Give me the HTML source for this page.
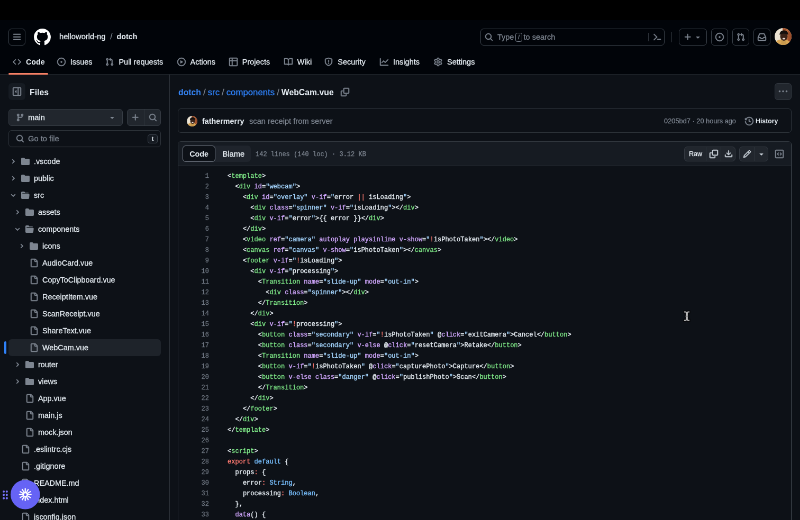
<!DOCTYPE html>
<html lang="en">
<head>
<meta charset="utf-8">
<title>dotch/src/components/WebCam.vue at main · helloworld-ng/dotch</title>
<style>
*{box-sizing:border-box;margin:0;padding:0}
html,body{width:800px;height:520px;overflow:hidden;background:#0d1117}
body{font-family:"Liberation Sans",sans-serif;color:#e6edf3}
#root{position:absolute;left:0;top:0;width:1512px;height:983px;transform:scale(0.529101);transform-origin:0 0;will-change:transform;overflow:hidden;font-size:14.7px;line-height:20px;-webkit-text-stroke:0.3px}
[style*="font-weight:700"],.navitem.sel span{-webkit-text-stroke:0}
.abs{position:absolute}
#topbar{position:absolute;left:0;top:0;width:1512px;height:38px;background:#000}
#hdr{position:absolute;left:0;top:38px;width:1512px;height:103px;background:#010409;border-bottom:1px solid #21262d}
.hbtn{position:absolute;width:32px;height:32px;border:1px solid #3d444d;border-radius:6px;display:flex;align-items:center;justify-content:center;color:#7d8590}
.navitem{position:absolute;top:69px;height:20px;display:flex;align-items:center;color:#e6edf3;white-space:nowrap}
.navitem svg{margin-right:9px}
.navitem span{font-size:14.500px}
.navitem.sel span{font-weight:700;font-size:14.3px}
#side{position:absolute;left:0;top:141px;width:321px;height:842px;border-right:1px solid #30363d}
#main{position:absolute;left:321px;top:141px;width:1191px;height:842px}
.btn{background:#21262d;border:1px solid #363c44;border-radius:6px}
.trow{position:absolute;left:16px;width:288px;height:32px;border-radius:6px}
.trow.tsel{background:#1e232a}
.trow.tsel .tname{color:#e6edf3}
.tind{position:absolute;left:-8px;top:4px;width:4px;height:24px;border-radius:6px;background:#2f81f7}
.tchev{position:absolute;top:10px}
.tico{position:absolute;top:8px}
.tname{position:absolute;top:6px;white-space:nowrap;color:#e6edf3;font-size:14.400px}
.cl{height:20px;white-space:pre;position:relative}
.ln{position:absolute;left:0;width:58px;text-align:right;color:#6e7681;font-family:"Liberation Mono",monospace;font-size:12px;line-height:20px}
.cc{position:absolute;left:93px;-webkit-text-stroke:0.4px;font-family:"Liberation Mono",monospace;font-size:12px;line-height:20px;color:#e6edf3;letter-spacing:0.015px}
.mut{color:#7d8590}
</style>
</head>
<body>
<div id="root">
  <div id="topbar"></div>
  <div id="hdr">
    <div class="hbtn" style="left:16px;top:16px"><svg width="16" height="16" viewBox="0 0 16 16" fill="#7d8590" stroke="#7d8590" stroke-width="0.55" style="display:block;flex:none;overflow:visible;"><path fill-rule="evenodd" d="M1 2.75A.75.75 0 0 1 1.75 2h12.5a.75.75 0 0 1 0 1.5H1.75A.75.75 0 0 1 1 2.75Zm0 5A.75.75 0 0 1 1.75 7h12.5a.75.75 0 0 1 0 1.5H1.75A.75.75 0 0 1 1 7.75ZM1.75 12h12.5a.75.75 0 0 1 0 1.5H1.75a.75.75 0 0 1 0-1.5Z"/></svg></div>
    <div class="abs" style="left:64px;top:16px;color:#fff"><svg width="32" height="32" viewBox="0 0 16 16" fill="#ffffff" stroke="#ffffff" stroke-width="0" style="display:block;flex:none;overflow:visible;"><path fill-rule="evenodd" d="M8 0c4.42 0 8 3.58 8 8a8.013 8.013 0 0 1-5.45 7.59c-.4.08-.55-.17-.55-.38 0-.27.01-1.13.01-2.2 0-.75-.25-1.23-.54-1.48 1.78-.2 3.65-.88 3.65-3.95 0-.88-.31-1.59-.82-2.15.08-.2.36-1.02-.08-2.12 0 0-.67-.22-2.2.82-.64-.18-1.32-.27-2-.27-.68 0-1.36.09-2 .27-1.53-1.03-2.2-.82-2.2-.82-.44 1.1-.16 1.92-.08 2.12-.51.56-.82 1.28-.82 2.15 0 3.06 1.86 3.75 3.64 3.95-.23.2-.44.55-.51 1.07-.46.21-1.61.55-2.33-.66-.15-.24-.6-.83-1.23-.82-.67.01-.27.38.01.53.34.19.73.9.82 1.13.16.45.68 1.31 2.69.94 0 .67.01 1.3.01 1.49 0 .21-.15.45-.55.38A7.995 7.995 0 0 1 0 8c0-4.42 3.58-8 8-8Z"/></svg></div>
    <div class="abs" style="left:112px;top:21px;white-space:nowrap"><span>helloworld-ng</span><span class="mut" style="margin:0 8px 0 9px">/</span><span style="font-weight:700;font-size:14.3px">dotch</span></div>
    <!-- search -->
    <div class="abs" style="left:908px;top:16px;width:348px;height:32px;border:1px solid #3d444d;border-radius:6px">
      <div class="abs" style="left:6.500px;top:6.500px"><svg width="16" height="16" viewBox="0 0 16 16" fill="#7d8590" stroke="#7d8590" stroke-width="0.55" style="display:block;flex:none;overflow:visible;"><path fill-rule="evenodd" d="M10.68 11.74a6 6 0 0 1-7.922-8.982 6 6 0 0 1 8.982 7.922l3.04 3.04a.749.749 0 0 1-.326 1.275.749.749 0 0 1-.734-.215ZM11.5 7a4.499 4.499 0 1 0-8.997 0A4.499 4.499 0 0 0 11.5 7Z"/></svg></div>
      <div class="abs mut" style="left:31px;top:5px;white-space:nowrap;font-size:14.5px">Type <span style="display:inline-block;border:1px solid #7d8590;border-radius:3.500px;font-size:11px;line-height:15px;padding:0 4px;vertical-align:1.500px;margin:0 -1.500px">/</span> to search</div>
      <div class="abs" style="left:316px;top:7px;width:1px;height:16px;background:#30363d"></div>
      <div class="abs" style="left:325px;top:7px"><svg width="16" height="16" viewBox="0 0 16 16" fill="#7d8590" stroke="#7d8590" stroke-width="0.55" style="display:block;flex:none;overflow:visible;"><path fill-rule="evenodd" d="m6.354 8.04-4.773 4.773a.75.75 0 1 0 1.061 1.06L7.945 8.57a.75.75 0 0 0 0-1.06L2.642 2.206a.75.75 0 0 0-1.06 1.061L6.353 8.04ZM8.75 11.5a.75.75 0 0 0 0 1.5h5.5a.75.75 0 0 0 0-1.5h-5.5Z"/></svg></div>
    </div>
    <div class="abs" style="left:1269px;top:22px;width:1px;height:20px;background:#30363d"></div>
    <div class="hbtn" style="left:1283px;top:16px;width:53px;justify-content:flex-start;padding-left:8px"><svg width="16" height="16" viewBox="0 0 16 16" fill="#7d8590" stroke="#7d8590" stroke-width="0.55" style="display:block;flex:none;overflow:visible;"><path fill-rule="evenodd" d="M7.75 2a.75.75 0 0 1 .75.75V7h4.25a.75.75 0 0 1 0 1.5H8.5v4.25a.75.75 0 0 1-1.5 0V8.5H2.75a.75.75 0 0 1 0-1.5H7V2.75A.75.75 0 0 1 7.75 2Z"/></svg><span style="margin-left:3px"><svg width="16" height="16" viewBox="0 0 16 16" fill="#7d8590" stroke="#7d8590" stroke-width="0" style="display:block;flex:none;overflow:visible;"><path fill-rule="evenodd" d="m4.427 7.427 3.396 3.396a.25.25 0 0 0 .354 0l3.396-3.396A.25.25 0 0 0 11.396 7H4.604a.25.25 0 0 0-.177.427Z"/></svg></span></div>
    <div class="hbtn" style="left:1344px;top:16px"><svg width="16" height="16" viewBox="0 0 16 16" fill="#7d8590" stroke="#7d8590" stroke-width="0.55" style="display:block;flex:none;overflow:visible;"><path fill-rule="evenodd" d="M8 9.5a1.5 1.5 0 1 0 0-3 1.5 1.5 0 0 0 0 3Z M8 0a8 8 0 1 1 0 16A8 8 0 0 1 8 0ZM1.5 8a6.5 6.5 0 1 0 13 0 6.5 6.5 0 0 0-13 0Z"/></svg></div>
    <div class="hbtn" style="left:1384px;top:16px"><svg width="16" height="16" viewBox="0 0 16 16" fill="#7d8590" stroke="#7d8590" stroke-width="0.55" style="display:block;flex:none;overflow:visible;"><path fill-rule="evenodd" d="M1.5 3.25a2.25 2.25 0 1 1 3 2.122v5.256a2.251 2.251 0 1 1-1.5 0V5.372A2.25 2.25 0 0 1 1.5 3.25Zm5.677-.177L9.573.677A.25.25 0 0 1 10 .854V2.5h1A2.5 2.5 0 0 1 13.5 5v5.628a2.251 2.251 0 1 1-1.5 0V5a1 1 0 0 0-1-1h-1v1.646a.25.25 0 0 1-.427.177L7.177 3.427a.25.25 0 0 1 0-.354ZM3.75 2.5a.75.75 0 1 0 0 1.5.75.75 0 0 0 0-1.5Zm0 9.5a.75.75 0 1 0 0 1.5.75.75 0 0 0 0-1.5Zm8.25.75a.75.75 0 1 0 1.5 0 .75.75 0 0 0-1.5 0Z"/></svg></div>
    <div class="hbtn" style="left:1424px;top:16px"><svg width="16" height="16" viewBox="0 0 16 16" fill="#7d8590" stroke="#7d8590" stroke-width="0.55" style="display:block;flex:none;overflow:visible;"><path fill-rule="evenodd" d="M2.8 2.06A1.75 1.75 0 0 1 4.41 1h7.18c.7 0 1.333.417 1.61 1.06l2.74 6.395c.04.093.06.194.06.295v4.5A1.75 1.75 0 0 1 14.25 15H1.75A1.75 1.75 0 0 1 0 13.25v-4.5c0-.101.02-.202.06-.295Zm1.61.44a.25.25 0 0 0-.23.152L1.887 8H4.75a.75.75 0 0 1 .6.3L6.625 10h2.75l1.275-1.7a.75.75 0 0 1 .6-.3h2.863L11.82 2.652a.25.25 0 0 0-.23-.152Zm10.09 7h-2.875l-1.275 1.7a.75.75 0 0 1-.6.3h-3.5a.75.75 0 0 1-.6-.3L4.375 9.500H1.5v3.750c0 .138.112.25.25.25h12.5a.25.25 0 0 0 .25-.25Z"/></svg></div>
    <svg class="abs" style="left:1464px;top:15px" width="32" height="32" viewBox="0 0 32 32"><defs><clipPath id="av"><circle cx="16" cy="16" r="16"/></clipPath></defs><g clip-path="url(#av)"><rect width="32" height="32" fill="#ebe3d3"/><rect x="15" width="17" height="32" fill="#9c4f2b"/><rect x="22" width="4" height="32" fill="#b7683c"/><path d="M0 32c1-8 6-10.500 15-10.500S29 24 31 32z" fill="#d8a655"/><path d="M13 22h8l1 10h-10z" fill="#c99a4e"/><ellipse cx="17.500" cy="15.500" rx="7" ry="8.500" fill="#3a2319"/><path d="M9.500 13c-.5-6 3.500-8.500 8-8.500s8.500 2.500 8 8.500c-2.500-3.500-13.500-3.500-16 0z" fill="#15100e"/><ellipse cx="17.500" cy="20" rx="2.800" ry="1.500" fill="#e9dcd4"/></g></svg>
    <!-- nav -->
    <div class="navitem sel" style="left:24px"><svg width="16" height="16" viewBox="0 0 16 16" fill="#7d8590" stroke="#7d8590" stroke-width="0.55" style="display:block;flex:none;overflow:visible;"><path fill-rule="evenodd" d="m11.28 3.22 4.25 4.25a.75.75 0 0 1 0 1.06l-4.25 4.25a.749.749 0 0 1-1.275-.326.749.749 0 0 1 .215-.734L13.94 8l-3.72-3.72a.749.749 0 0 1 .326-1.275.749.749 0 0 1 .734.215Zm-6.56 0a.751.751 0 0 1 1.042.018.751.751 0 0 1 .018 1.042L2.06 8l3.72 3.72a.749.749 0 0 1-.326 1.275.749.749 0 0 1-.734-.215L.47 8.53a.75.75 0 0 1 0-1.06Z"/></svg><span>Code</span></div><div class="navitem" style="left:107.7px"><svg width="16" height="16" viewBox="0 0 16 16" fill="#7d8590" stroke="#7d8590" stroke-width="0.55" style="display:block;flex:none;overflow:visible;"><path fill-rule="evenodd" d="M8 9.5a1.5 1.5 0 1 0 0-3 1.5 1.5 0 0 0 0 3Z M8 0a8 8 0 1 1 0 16A8 8 0 0 1 8 0ZM1.5 8a6.5 6.5 0 1 0 13 0 6.5 6.5 0 0 0-13 0Z"/></svg><span>Issues</span></div><div class="navitem" style="left:199.4px"><svg width="16" height="16" viewBox="0 0 16 16" fill="#7d8590" stroke="#7d8590" stroke-width="0.55" style="display:block;flex:none;overflow:visible;"><path fill-rule="evenodd" d="M1.5 3.25a2.25 2.25 0 1 1 3 2.122v5.256a2.251 2.251 0 1 1-1.5 0V5.372A2.25 2.25 0 0 1 1.5 3.25Zm5.677-.177L9.573.677A.25.25 0 0 1 10 .854V2.5h1A2.5 2.5 0 0 1 13.5 5v5.628a2.251 2.251 0 1 1-1.5 0V5a1 1 0 0 0-1-1h-1v1.646a.25.25 0 0 1-.427.177L7.177 3.427a.25.25 0 0 1 0-.354ZM3.75 2.5a.75.75 0 1 0 0 1.5.75.75 0 0 0 0-1.5Zm0 9.5a.75.75 0 1 0 0 1.5.75.75 0 0 0 0-1.5Zm8.25.75a.75.75 0 1 0 1.5 0 .75.75 0 0 0-1.5 0Z"/></svg><span>Pull requests</span></div><div class="navitem" style="left:334.5px"><svg width="16" height="16" viewBox="0 0 16 16" fill="#7d8590" stroke="#7d8590" stroke-width="0.55" style="display:block;flex:none;overflow:visible;"><path fill-rule="evenodd" d="M8 0a8 8 0 1 1 0 16A8 8 0 0 1 8 0ZM1.5 8a6.5 6.5 0 1 0 13 0 6.5 6.5 0 0 0-13 0Zm4.879-2.773 4.264 2.559a.25.25 0 0 1 0 .428l-4.264 2.559A.25.25 0 0 1 6 10.559V5.442a.25.25 0 0 1 .379-.215Z"/></svg><span>Actions</span></div><div class="navitem" style="left:432.8px"><svg width="16" height="16" viewBox="0 0 16 16" fill="#7d8590" stroke="#7d8590" stroke-width="0.55" style="display:block;flex:none;overflow:visible;"><path fill-rule="evenodd" d="M0 1.75C0 .784.784 0 1.75 0h12.5C15.216 0 16 .784 16 1.75v12.5A1.75 1.75 0 0 1 14.25 16H1.75A1.75 1.75 0 0 1 0 14.25ZM6.5 6.5v8h7.75a.25.25 0 0 0 .25-.25V6.5Zm8-1.5V1.75a.25.25 0 0 0-.25-.25H6.5V5Zm-13 1.5v7.75c0 .138.112.25.25.25H5v-8ZM5 5V1.5H1.75a.25.25 0 0 0-.25.25V5Z"/></svg><span>Projects</span></div><div class="navitem" style="left:536.8px"><svg width="16" height="16" viewBox="0 0 16 16" fill="#7d8590" stroke="#7d8590" stroke-width="0.55" style="display:block;flex:none;overflow:visible;"><path fill-rule="evenodd" d="M0 1.75A.75.75 0 0 1 .75 1h4.253c1.227 0 2.317.59 3 1.501A3.743 3.743 0 0 1 11.006 1h4.245a.75.75 0 0 1 .75.75v10.5a.75.75 0 0 1-.75.75h-4.507a2.25 2.25 0 0 0-1.591.659l-.622.621a.75.75 0 0 1-1.06 0l-.622-.621A2.25 2.25 0 0 0 5.258 13H.75a.75.75 0 0 1-.75-.75Zm7.251 10.324.004-5.073-.002-2.253A2.25 2.25 0 0 0 5.003 2.5H1.5v9h3.757a3.75 3.75 0 0 1 1.994.574ZM8.755 4.75l-.004 7.322a3.752 3.752 0 0 1 1.992-.572H14.5v-9h-3.495a2.25 2.25 0 0 0-2.25 2.25Z"/></svg><span>Wiki</span></div><div class="navitem" style="left:613.3px"><svg width="16" height="16" viewBox="0 0 16 16" fill="#7d8590" stroke="#7d8590" stroke-width="0.55" style="display:block;flex:none;overflow:visible;"><path fill-rule="evenodd" d="M7.467.133a1.748 1.748 0 0 1 1.066 0l5.25 1.68A1.75 1.75 0 0 1 15 3.48V7c0 1.566-.32 3.182-1.303 4.682-.983 1.498-2.585 2.813-5.032 3.855a1.697 1.697 0 0 1-1.33 0c-2.447-1.042-4.049-2.357-5.032-3.855C1.32 10.182 1 8.566 1 7V3.48a1.75 1.75 0 0 1 1.217-1.667Zm.61 1.429a.25.25 0 0 0-.153 0l-5.25 1.68a.25.25 0 0 0-.174.238V7c0 1.358.275 2.666 1.057 3.86.784 1.194 2.121 2.34 4.366 3.297a.196.196 0 0 0 .154 0c2.245-.956 3.582-2.104 4.366-3.298C13.225 9.666 13.5 8.36 13.5 7V3.48a.251.251 0 0 0-.174-.237l-5.25-1.68ZM8.75 4.75v3a.75.75 0 0 1-1.5 0v-3a.75.75 0 0 1 1.5 0ZM9 10.5a1 1 0 1 1-2 0 1 1 0 0 1 2 0Z"/></svg><span>Security</span></div><div class="navitem" style="left:718px"><svg width="16" height="16" viewBox="0 0 16 16" fill="#7d8590" stroke="#7d8590" stroke-width="0.55" style="display:block;flex:none;overflow:visible;"><path fill-rule="evenodd" d="M1.5 1.75V13.5h13.75a.75.75 0 0 1 0 1.5H.75a.75.75 0 0 1-.75-.75V1.75a.75.75 0 0 1 1.5 0Zm14.28 2.53-5.25 5.25a.75.75 0 0 1-1.06 0L7 7.06 4.28 9.78a.751.751 0 0 1-1.042-.018.751.751 0 0 1-.018-1.042l3.25-3.25a.75.75 0 0 1 1.06 0L10 7.94l4.72-4.72a.751.751 0 0 1 1.042.018.751.751 0 0 1 .018 1.042Z"/></svg><span>Insights</span></div><div class="navitem" style="left:820px"><svg width="16" height="16" viewBox="0 0 16 16" fill="#7d8590" stroke="#7d8590" stroke-width="0.55" style="display:block;flex:none;overflow:visible;"><path fill-rule="evenodd" d="M8 0a8.2 8.2 0 0 1 .701.031C9.444.095 9.99.645 10.16 1.29l.288 1.107c.018.066.079.158.212.224.231.114.454.243.668.386.123.082.233.09.299.071l1.103-.303c.644-.176 1.392.021 1.82.63.27.385.506.792.704 1.218.315.675.111 1.422-.364 1.891l-.814.806c-.049.048-.098.147-.088.294.016.257.016.515 0 .772-.01.147.038.246.088.294l.814.806c.475.469.679 1.216.364 1.891a7.977 7.977 0 0 1-.704 1.217c-.428.61-1.176.807-1.82.63l-1.102-.302c-.067-.019-.177-.011-.3.071a5.909 5.909 0 0 1-.668.386c-.133.066-.194.158-.211.224l-.29 1.106c-.168.646-.715 1.196-1.458 1.26a8.006 8.006 0 0 1-1.402 0c-.743-.064-1.289-.614-1.458-1.26l-.289-1.106c-.018-.066-.079-.158-.212-.224a5.738 5.738 0 0 1-.668-.386c-.123-.082-.233-.09-.299-.071l-1.103.303c-.644.176-1.392-.021-1.82-.63a8.12 8.12 0 0 1-.704-1.218c-.315-.675-.111-1.422.363-1.891l.815-.806c.05-.048.098-.147.088-.294a6.214 6.214 0 0 1 0-.772c.01-.147-.038-.246-.088-.294l-.815-.806C.635 6.045.431 5.298.746 4.623a7.92 7.92 0 0 1 .704-1.217c.428-.61 1.176-.807 1.82-.63l1.102.302c.067.019.177.011.3-.071.214-.143.437-.272.668-.386.133-.066.194-.158.211-.224l.29-1.106C6.009.645 6.556.095 7.299.03 7.53.01 7.764 0 8 0Zm-.571 1.525c-.036.003-.108.036-.137.146l-.289 1.105c-.147.561-.549.967-.998 1.189-.173.086-.34.183-.5.29-.417.278-.97.423-1.529.27l-1.103-.303c-.109-.03-.175.016-.195.045-.22.312-.412.644-.573.99-.014.031-.021.11.059.19l.815.806c.411.406.562.957.53 1.456a4.709 4.709 0 0 0 0 .582c.032.499-.119 1.05-.53 1.456l-.815.806c-.081.08-.073.159-.059.19.162.346.353.677.573.989.02.03.085.076.195.046l1.102-.303c.56-.153 1.113-.008 1.53.27.161.107.328.204.501.29.447.222.85.629.997 1.189l.289 1.105c.029.109.101.143.137.146a6.6 6.6 0 0 0 1.142 0c.036-.003.108-.036.137-.146l.289-1.105c.147-.561.549-.967.998-1.189.173-.086.34-.183.5-.29.417-.278.97-.423 1.529-.27l1.103.303c.109.029.175-.016.195-.045.22-.313.411-.644.573-.99.014-.031.021-.11-.059-.19l-.815-.806c-.411-.406-.562-.957-.53-1.456a4.709 4.709 0 0 0 0-.582c-.032-.499.119-1.05.53-1.456l.815-.806c.081-.08.073-.159.059-.19a6.464 6.464 0 0 0-.573-.989c-.02-.03-.085-.076-.195-.046l-1.102.303c-.56.153-1.113.008-1.53-.27a4.44 4.44 0 0 0-.501-.29c-.447-.222-.85-.629-.997-1.189l-.289-1.105c-.029-.11-.101-.143-.137-.146a6.6 6.6 0 0 0-1.142 0ZM11 8a3 3 0 1 1-6 0 3 3 0 0 1 6 0ZM9.5 8a1.5 1.5 0 1 0-3.001.001A1.5 1.5 0 0 0 9.5 8Z"/></svg><span>Settings</span></div>
    <div class="abs" style="left:16px;top:100px;width:75px;height:3px;border-radius:6px;background:#f78166"></div>
  </div>

  <div id="side">
    <div class="abs" style="left:16px;top:16px;width:32px;height:32px;border-radius:6px;background:#161b22;display:flex;align-items:center;justify-content:center"><svg width="16" height="16" viewBox="0 0 16 16" fill="#7d8590" stroke="#7d8590" stroke-width="0.55" style="display:block;flex:none;overflow:visible;"><path fill-rule="evenodd" d="m4.177 7.823 2.396-2.396A.25.25 0 0 1 7 5.604v4.792a.25.25 0 0 1-.427.177L4.177 8.177a.25.25 0 0 1 0-.354Z M0 1.75C0 .784.784 0 1.75 0h12.5C15.216 0 16 .784 16 1.75v12.5A1.75 1.75 0 0 1 14.25 16H1.75A1.75 1.75 0 0 1 0 14.25Zm1.75-.25a.25.25 0 0 0-.25.25v12.5c0 .138.112.25.25.25H9.5v-13Zm12.5 13a.25.25 0 0 0 .25-.25V1.75a.25.25 0 0 0-.25-.25H11v13Z"/></svg></div>
    <div class="abs" style="left:56px;top:22px;font-size:15.800px;font-weight:700;line-height:24px">Files</div>
    <!-- branch -->
    <div class="abs btn" style="left:16px;top:65px;width:216px;height:32px">
      <div class="abs" style="left:13px;top:7px"><svg width="16" height="16" viewBox="0 0 16 16" fill="#7d8590" stroke="#7d8590" stroke-width="0.55" style="display:block;flex:none;overflow:visible;"><path fill-rule="evenodd" d="M9.5 3.25a2.25 2.25 0 1 1 3 2.122V6A2.5 2.5 0 0 1 10 8.5H6a1 1 0 0 0-1 1v1.128a2.251 2.251 0 1 1-1.5 0V5.372a2.25 2.25 0 1 1 1.5 0v1.836A2.493 2.493 0 0 1 6 7h4a1 1 0 0 0 1-1v-.628A2.25 2.25 0 0 1 9.5 3.25Zm-6 0a.75.75 0 1 0 1.5 0 .75.75 0 0 0-1.5 0Zm8.25-.75a.75.75 0 1 0 0 1.5.75.75 0 0 0 0-1.5ZM4.25 12a.75.75 0 1 0 0 1.5.75.75 0 0 0 0-1.5Z"/></svg></div>
      <div class="abs" style="left:36px;top:5px">main</div>
      <div class="abs" style="left:187px;top:7px"><svg width="16" height="16" viewBox="0 0 16 16" fill="#7d8590" stroke="#7d8590" stroke-width="0" style="display:block;flex:none;overflow:visible;"><path fill-rule="evenodd" d="m4.427 7.427 3.396 3.396a.25.25 0 0 0 .354 0l3.396-3.396A.25.25 0 0 0 11.396 7H4.604a.25.25 0 0 0-.177.427Z"/></svg></div>
    </div>
    <div class="abs btn" style="left:240px;top:65px;width:64px;height:32px">
      <div class="abs" style="left:7px;top:7px"><svg width="16" height="16" viewBox="0 0 16 16" fill="#7d8590" stroke="#7d8590" stroke-width="0.55" style="display:block;flex:none;overflow:visible;"><path fill-rule="evenodd" d="M7.75 2a.75.75 0 0 1 .75.75V7h4.25a.75.75 0 0 1 0 1.5H8.5v4.25a.75.75 0 0 1-1.5 0V8.5H2.75a.75.75 0 0 1 0-1.5H7V2.75A.75.75 0 0 1 7.75 2Z"/></svg></div>
      <div class="abs" style="left:31px;top:0;width:1px;height:30px;background:#30363d"></div>
      <div class="abs" style="left:40px;top:7px"><svg width="16" height="16" viewBox="0 0 16 16" fill="#7d8590" stroke="#7d8590" stroke-width="0.55" style="display:block;flex:none;overflow:visible;"><path fill-rule="evenodd" d="M10.68 11.74a6 6 0 0 1-7.922-8.982 6 6 0 0 1 8.982 7.922l3.04 3.04a.749.749 0 0 1-.326 1.275.749.749 0 0 1-.734-.215ZM11.5 7a4.499 4.499 0 1 0-8.997 0A4.499 4.499 0 0 0 11.5 7Z"/></svg></div>
    </div>
    <!-- go to file -->
    <div class="abs" style="left:16px;top:105px;width:288px;height:32px;border:1px solid #30363d;border-radius:6px">
      <div class="abs" style="left:13px;top:7px"><svg width="16" height="16" viewBox="0 0 16 16" fill="#7d8590" stroke="#7d8590" stroke-width="0.55" style="display:block;flex:none;overflow:visible;"><path fill-rule="evenodd" d="M10.68 11.74a6 6 0 0 1-7.922-8.982 6 6 0 0 1 8.982 7.922l3.04 3.04a.749.749 0 0 1-.326 1.275.749.749 0 0 1-.734-.215ZM11.5 7a4.499 4.499 0 1 0-8.997 0A4.499 4.499 0 0 0 11.5 7Z"/></svg></div>
      <div class="abs mut" style="left:36px;top:5px">Go to file</div>
      <div class="abs" style="left:262px;top:7px;width:19px;height:17px;border:1px solid #3d444d;border-radius:4px;background:#161b22;color:#e6edf3;font-size:11px;line-height:14px;text-align:center;font-weight:700">t</div>
    </div>
  </div>
  <div id="tree" class="abs" style="left:0;top:0;width:320px;height:983px;overflow:hidden">
    <div class="trow" style="top:289px"><span class="tchev" style="left:3px"><svg width="12" height="12" viewBox="0 0 12 12" fill="#7d8590" stroke="#7d8590" stroke-width="0.55" style="display:block;flex:none;overflow:visible;"><path fill-rule="evenodd" d="M4.7 10c-.2 0-.4-.1-.5-.2-.3-.3-.3-.8 0-1.1L6.9 6 4.2 3.3c-.3-.3-.3-.8 0-1.1.3-.3.8-.3 1.1 0l3.300 3.200c.3.3.3.8 0 1.100L5.300 9.700c-.2.200-.4.300-.6.300Z"/></svg></span><span class="tico" style="left:24px"><svg width="16" height="16" viewBox="0 0 16 16" fill="#7d8590" stroke="#7d8590" stroke-width="0" style="display:block;flex:none;overflow:visible;"><path fill-rule="evenodd" d="M1.75 1A1.75 1.75 0 0 0 0 2.75v10.5C0 14.216.784 15 1.75 15h12.5A1.75 1.75 0 0 0 16 13.25v-8.5A1.75 1.75 0 0 0 14.25 3H7.5a.25.25 0 0 1-.2-.1l-.9-1.2C6.07 1.26 5.55 1 5 1H1.75Z"/></svg></span><span class="tname" style="left:48px">.vscode</span></div><div class="trow" style="top:321px"><span class="tchev" style="left:3px"><svg width="12" height="12" viewBox="0 0 12 12" fill="#7d8590" stroke="#7d8590" stroke-width="0.55" style="display:block;flex:none;overflow:visible;"><path fill-rule="evenodd" d="M4.7 10c-.2 0-.4-.1-.5-.2-.3-.3-.3-.8 0-1.1L6.9 6 4.2 3.3c-.3-.3-.3-.8 0-1.1.3-.3.8-.3 1.1 0l3.300 3.200c.3.3.3.8 0 1.100L5.300 9.700c-.2.200-.4.300-.6.300Z"/></svg></span><span class="tico" style="left:24px"><svg width="16" height="16" viewBox="0 0 16 16" fill="#7d8590" stroke="#7d8590" stroke-width="0" style="display:block;flex:none;overflow:visible;"><path fill-rule="evenodd" d="M1.75 1A1.75 1.75 0 0 0 0 2.75v10.5C0 14.216.784 15 1.75 15h12.5A1.75 1.75 0 0 0 16 13.25v-8.5A1.75 1.75 0 0 0 14.25 3H7.5a.25.25 0 0 1-.2-.1l-.9-1.2C6.07 1.26 5.55 1 5 1H1.75Z"/></svg></span><span class="tname" style="left:48px">public</span></div><div class="trow" style="top:353px"><span class="tchev" style="left:3px"><svg width="12" height="12" viewBox="0 0 12 12" fill="#7d8590" stroke="#7d8590" stroke-width="0.55" style="display:block;flex:none;overflow:visible;"><path fill-rule="evenodd" d="M6 8.825c-.2 0-.4-.1-.5-.2l-3.300-3.300c-.3-.3-.3-.8 0-1.100.3-.3.8-.3 1.100 0l2.700 2.700 2.700-2.700c.3-.3.8-.3 1.100 0 .3.3.3.8 0 1.100l-3.200 3.200c-.2.200-.4.300-.6.300Z"/></svg></span><span class="tico" style="left:24px"><svg width="16" height="16" viewBox="0 0 16 16" fill="#7d8590" stroke="#7d8590" stroke-width="0" style="display:block;flex:none;overflow:visible;"><path fill-rule="evenodd" d="M.513 1.513A1.75 1.75 0 0 1 1.75 1h3.5c.55 0 1.07.26 1.4.7l.9 1.2a.25.25 0 0 0 .2.1H13a1 1 0 0 1 1 1v.5H2.75a.75.75 0 0 0 0 1.5h11.978a1 1 0 0 1 .994 1.117L15 13.25A1.75 1.75 0 0 1 13.25 15H1.75A1.75 1.75 0 0 1 0 13.25V2.75c0-.464.184-.91.513-1.237Z"/></svg></span><span class="tname" style="left:48px">src</span></div><div class="trow" style="top:385px"><span class="tchev" style="left:11px"><svg width="12" height="12" viewBox="0 0 12 12" fill="#7d8590" stroke="#7d8590" stroke-width="0.55" style="display:block;flex:none;overflow:visible;"><path fill-rule="evenodd" d="M4.7 10c-.2 0-.4-.1-.5-.2-.3-.3-.3-.8 0-1.1L6.9 6 4.2 3.3c-.3-.3-.3-.8 0-1.1.3-.3.8-.3 1.1 0l3.300 3.200c.3.3.3.8 0 1.100L5.300 9.700c-.2.200-.4.300-.6.300Z"/></svg></span><span class="tico" style="left:32px"><svg width="16" height="16" viewBox="0 0 16 16" fill="#7d8590" stroke="#7d8590" stroke-width="0" style="display:block;flex:none;overflow:visible;"><path fill-rule="evenodd" d="M1.75 1A1.75 1.75 0 0 0 0 2.75v10.5C0 14.216.784 15 1.75 15h12.5A1.75 1.75 0 0 0 16 13.25v-8.5A1.75 1.75 0 0 0 14.25 3H7.5a.25.25 0 0 1-.2-.1l-.9-1.2C6.07 1.26 5.55 1 5 1H1.75Z"/></svg></span><span class="tname" style="left:56px">assets</span></div><div class="trow" style="top:417px"><span class="tchev" style="left:11px"><svg width="12" height="12" viewBox="0 0 12 12" fill="#7d8590" stroke="#7d8590" stroke-width="0.55" style="display:block;flex:none;overflow:visible;"><path fill-rule="evenodd" d="M6 8.825c-.2 0-.4-.1-.5-.2l-3.300-3.300c-.3-.3-.3-.8 0-1.100.3-.3.8-.3 1.100 0l2.700 2.700 2.700-2.700c.3-.3.8-.3 1.100 0 .3.3.3.8 0 1.100l-3.200 3.200c-.2.200-.4.300-.6.300Z"/></svg></span><span class="tico" style="left:32px"><svg width="16" height="16" viewBox="0 0 16 16" fill="#7d8590" stroke="#7d8590" stroke-width="0" style="display:block;flex:none;overflow:visible;"><path fill-rule="evenodd" d="M.513 1.513A1.75 1.75 0 0 1 1.75 1h3.5c.55 0 1.07.26 1.4.7l.9 1.2a.25.25 0 0 0 .2.1H13a1 1 0 0 1 1 1v.5H2.75a.75.75 0 0 0 0 1.5h11.978a1 1 0 0 1 .994 1.117L15 13.25A1.75 1.75 0 0 1 13.25 15H1.75A1.75 1.75 0 0 1 0 13.25V2.75c0-.464.184-.91.513-1.237Z"/></svg></span><span class="tname" style="left:56px">components</span></div><div class="trow" style="top:449px"><span class="tchev" style="left:19px"><svg width="12" height="12" viewBox="0 0 12 12" fill="#7d8590" stroke="#7d8590" stroke-width="0.55" style="display:block;flex:none;overflow:visible;"><path fill-rule="evenodd" d="M4.7 10c-.2 0-.4-.1-.5-.2-.3-.3-.3-.8 0-1.1L6.9 6 4.2 3.3c-.3-.3-.3-.8 0-1.1.3-.3.8-.3 1.1 0l3.300 3.200c.3.3.3.8 0 1.100L5.300 9.700c-.2.200-.4.300-.6.300Z"/></svg></span><span class="tico" style="left:40px"><svg width="16" height="16" viewBox="0 0 16 16" fill="#7d8590" stroke="#7d8590" stroke-width="0" style="display:block;flex:none;overflow:visible;"><path fill-rule="evenodd" d="M1.75 1A1.75 1.75 0 0 0 0 2.75v10.5C0 14.216.784 15 1.75 15h12.5A1.75 1.75 0 0 0 16 13.25v-8.5A1.75 1.75 0 0 0 14.25 3H7.5a.25.25 0 0 1-.2-.1l-.9-1.2C6.07 1.26 5.55 1 5 1H1.75Z"/></svg></span><span class="tname" style="left:64px">icons</span></div><div class="trow" style="top:481px"><span class="tico" style="left:40px"><svg width="16" height="16" viewBox="0 0 16 16" fill="#7d8590" stroke="#7d8590" stroke-width="0.55" style="display:block;flex:none;overflow:visible;"><path fill-rule="evenodd" d="M2 1.75C2 .784 2.784 0 3.75 0h6.586c.464 0 .909.184 1.237.513l2.914 2.914c.329.328.513.773.513 1.237v9.586A1.75 1.75 0 0 1 13.25 16h-9.5A1.75 1.75 0 0 1 2 14.25Zm1.75-.25a.25.25 0 0 0-.25.25v12.5c0 .138.112.25.25.25h9.5a.25.25 0 0 0 .25-.25V6h-2.75A1.75 1.75 0 0 1 9 4.25V1.5Zm6.75.062V4.25c0 .138.112.25.25.25h2.688l-.011-.013-2.914-2.914-.013-.011Z"/></svg></span><span class="tname" style="left:64px">AudioCard.vue</span></div><div class="trow" style="top:513px"><span class="tico" style="left:40px"><svg width="16" height="16" viewBox="0 0 16 16" fill="#7d8590" stroke="#7d8590" stroke-width="0.55" style="display:block;flex:none;overflow:visible;"><path fill-rule="evenodd" d="M2 1.75C2 .784 2.784 0 3.75 0h6.586c.464 0 .909.184 1.237.513l2.914 2.914c.329.328.513.773.513 1.237v9.586A1.75 1.75 0 0 1 13.25 16h-9.5A1.75 1.75 0 0 1 2 14.25Zm1.75-.25a.25.25 0 0 0-.25.25v12.5c0 .138.112.25.25.25h9.5a.25.25 0 0 0 .25-.25V6h-2.75A1.75 1.75 0 0 1 9 4.25V1.5Zm6.75.062V4.25c0 .138.112.25.25.25h2.688l-.011-.013-2.914-2.914-.013-.011Z"/></svg></span><span class="tname" style="left:64px">CopyToClipboard.vue</span></div><div class="trow" style="top:545px"><span class="tico" style="left:40px"><svg width="16" height="16" viewBox="0 0 16 16" fill="#7d8590" stroke="#7d8590" stroke-width="0.55" style="display:block;flex:none;overflow:visible;"><path fill-rule="evenodd" d="M2 1.75C2 .784 2.784 0 3.75 0h6.586c.464 0 .909.184 1.237.513l2.914 2.914c.329.328.513.773.513 1.237v9.586A1.75 1.75 0 0 1 13.25 16h-9.5A1.75 1.75 0 0 1 2 14.25Zm1.75-.25a.25.25 0 0 0-.25.25v12.5c0 .138.112.25.25.25h9.5a.25.25 0 0 0 .25-.25V6h-2.75A1.75 1.75 0 0 1 9 4.25V1.5Zm6.75.062V4.25c0 .138.112.25.25.25h2.688l-.011-.013-2.914-2.914-.013-.011Z"/></svg></span><span class="tname" style="left:64px">ReceiptItem.vue</span></div><div class="trow" style="top:577px"><span class="tico" style="left:40px"><svg width="16" height="16" viewBox="0 0 16 16" fill="#7d8590" stroke="#7d8590" stroke-width="0.55" style="display:block;flex:none;overflow:visible;"><path fill-rule="evenodd" d="M2 1.75C2 .784 2.784 0 3.75 0h6.586c.464 0 .909.184 1.237.513l2.914 2.914c.329.328.513.773.513 1.237v9.586A1.75 1.75 0 0 1 13.25 16h-9.5A1.75 1.75 0 0 1 2 14.25Zm1.75-.25a.25.25 0 0 0-.25.25v12.5c0 .138.112.25.25.25h9.5a.25.25 0 0 0 .25-.25V6h-2.75A1.75 1.75 0 0 1 9 4.25V1.5Zm6.75.062V4.25c0 .138.112.25.25.25h2.688l-.011-.013-2.914-2.914-.013-.011Z"/></svg></span><span class="tname" style="left:64px">ScanReceipt.vue</span></div><div class="trow" style="top:609px"><span class="tico" style="left:40px"><svg width="16" height="16" viewBox="0 0 16 16" fill="#7d8590" stroke="#7d8590" stroke-width="0.55" style="display:block;flex:none;overflow:visible;"><path fill-rule="evenodd" d="M2 1.75C2 .784 2.784 0 3.75 0h6.586c.464 0 .909.184 1.237.513l2.914 2.914c.329.328.513.773.513 1.237v9.586A1.75 1.75 0 0 1 13.25 16h-9.5A1.75 1.75 0 0 1 2 14.25Zm1.75-.25a.25.25 0 0 0-.25.25v12.5c0 .138.112.25.25.25h9.5a.25.25 0 0 0 .25-.25V6h-2.75A1.75 1.75 0 0 1 9 4.25V1.5Zm6.75.062V4.25c0 .138.112.25.25.25h2.688l-.011-.013-2.914-2.914-.013-.011Z"/></svg></span><span class="tname" style="left:64px">ShareText.vue</span></div><div class="trow tsel" style="top:641px"><i class="tind"></i><span class="tico" style="left:40px"><svg width="16" height="16" viewBox="0 0 16 16" fill="#7d8590" stroke="#7d8590" stroke-width="0.55" style="display:block;flex:none;overflow:visible;"><path fill-rule="evenodd" d="M2 1.75C2 .784 2.784 0 3.75 0h6.586c.464 0 .909.184 1.237.513l2.914 2.914c.329.328.513.773.513 1.237v9.586A1.75 1.75 0 0 1 13.25 16h-9.5A1.75 1.75 0 0 1 2 14.25Zm1.75-.25a.25.25 0 0 0-.25.25v12.5c0 .138.112.25.25.25h9.5a.25.25 0 0 0 .25-.25V6h-2.75A1.75 1.75 0 0 1 9 4.25V1.5Zm6.75.062V4.25c0 .138.112.25.25.25h2.688l-.011-.013-2.914-2.914-.013-.011Z"/></svg></span><span class="tname" style="left:64px">WebCam.vue</span></div><div class="trow" style="top:673px"><span class="tchev" style="left:11px"><svg width="12" height="12" viewBox="0 0 12 12" fill="#7d8590" stroke="#7d8590" stroke-width="0.55" style="display:block;flex:none;overflow:visible;"><path fill-rule="evenodd" d="M4.7 10c-.2 0-.4-.1-.5-.2-.3-.3-.3-.8 0-1.1L6.9 6 4.2 3.3c-.3-.3-.3-.8 0-1.1.3-.3.8-.3 1.1 0l3.300 3.200c.3.3.3.8 0 1.100L5.300 9.700c-.2.200-.4.300-.6.300Z"/></svg></span><span class="tico" style="left:32px"><svg width="16" height="16" viewBox="0 0 16 16" fill="#7d8590" stroke="#7d8590" stroke-width="0" style="display:block;flex:none;overflow:visible;"><path fill-rule="evenodd" d="M1.75 1A1.75 1.75 0 0 0 0 2.75v10.5C0 14.216.784 15 1.75 15h12.5A1.75 1.75 0 0 0 16 13.25v-8.5A1.75 1.75 0 0 0 14.25 3H7.5a.25.25 0 0 1-.2-.1l-.9-1.2C6.07 1.26 5.55 1 5 1H1.75Z"/></svg></span><span class="tname" style="left:56px">router</span></div><div class="trow" style="top:705px"><span class="tchev" style="left:11px"><svg width="12" height="12" viewBox="0 0 12 12" fill="#7d8590" stroke="#7d8590" stroke-width="0.55" style="display:block;flex:none;overflow:visible;"><path fill-rule="evenodd" d="M4.7 10c-.2 0-.4-.1-.5-.2-.3-.3-.3-.8 0-1.1L6.9 6 4.2 3.3c-.3-.3-.3-.8 0-1.1.3-.3.8-.3 1.1 0l3.300 3.200c.3.3.3.8 0 1.100L5.300 9.700c-.2.200-.4.300-.6.300Z"/></svg></span><span class="tico" style="left:32px"><svg width="16" height="16" viewBox="0 0 16 16" fill="#7d8590" stroke="#7d8590" stroke-width="0" style="display:block;flex:none;overflow:visible;"><path fill-rule="evenodd" d="M1.75 1A1.75 1.75 0 0 0 0 2.75v10.5C0 14.216.784 15 1.75 15h12.5A1.75 1.75 0 0 0 16 13.25v-8.5A1.75 1.75 0 0 0 14.25 3H7.5a.25.25 0 0 1-.2-.1l-.9-1.2C6.07 1.26 5.55 1 5 1H1.75Z"/></svg></span><span class="tname" style="left:56px">views</span></div><div class="trow" style="top:737px"><span class="tico" style="left:32px"><svg width="16" height="16" viewBox="0 0 16 16" fill="#7d8590" stroke="#7d8590" stroke-width="0.55" style="display:block;flex:none;overflow:visible;"><path fill-rule="evenodd" d="M2 1.75C2 .784 2.784 0 3.75 0h6.586c.464 0 .909.184 1.237.513l2.914 2.914c.329.328.513.773.513 1.237v9.586A1.75 1.75 0 0 1 13.25 16h-9.5A1.75 1.75 0 0 1 2 14.25Zm1.75-.25a.25.25 0 0 0-.25.25v12.5c0 .138.112.25.25.25h9.5a.25.25 0 0 0 .25-.25V6h-2.75A1.75 1.75 0 0 1 9 4.25V1.5Zm6.75.062V4.25c0 .138.112.25.25.25h2.688l-.011-.013-2.914-2.914-.013-.011Z"/></svg></span><span class="tname" style="left:56px">App.vue</span></div><div class="trow" style="top:769px"><span class="tico" style="left:32px"><svg width="16" height="16" viewBox="0 0 16 16" fill="#7d8590" stroke="#7d8590" stroke-width="0.55" style="display:block;flex:none;overflow:visible;"><path fill-rule="evenodd" d="M2 1.75C2 .784 2.784 0 3.75 0h6.586c.464 0 .909.184 1.237.513l2.914 2.914c.329.328.513.773.513 1.237v9.586A1.75 1.75 0 0 1 13.25 16h-9.5A1.75 1.75 0 0 1 2 14.25Zm1.75-.25a.25.25 0 0 0-.25.25v12.5c0 .138.112.25.25.25h9.5a.25.25 0 0 0 .25-.25V6h-2.75A1.75 1.75 0 0 1 9 4.25V1.5Zm6.75.062V4.25c0 .138.112.25.25.25h2.688l-.011-.013-2.914-2.914-.013-.011Z"/></svg></span><span class="tname" style="left:56px">main.js</span></div><div class="trow" style="top:801px"><span class="tico" style="left:32px"><svg width="16" height="16" viewBox="0 0 16 16" fill="#7d8590" stroke="#7d8590" stroke-width="0.55" style="display:block;flex:none;overflow:visible;"><path fill-rule="evenodd" d="M2 1.75C2 .784 2.784 0 3.75 0h6.586c.464 0 .909.184 1.237.513l2.914 2.914c.329.328.513.773.513 1.237v9.586A1.75 1.75 0 0 1 13.25 16h-9.5A1.75 1.75 0 0 1 2 14.25Zm1.75-.25a.25.25 0 0 0-.25.25v12.5c0 .138.112.25.25.25h9.5a.25.25 0 0 0 .25-.25V6h-2.75A1.75 1.75 0 0 1 9 4.25V1.5Zm6.75.062V4.25c0 .138.112.25.25.25h2.688l-.011-.013-2.914-2.914-.013-.011Z"/></svg></span><span class="tname" style="left:56px">mock.json</span></div><div class="trow" style="top:833px"><span class="tico" style="left:24px"><svg width="16" height="16" viewBox="0 0 16 16" fill="#7d8590" stroke="#7d8590" stroke-width="0.55" style="display:block;flex:none;overflow:visible;"><path fill-rule="evenodd" d="M2 1.75C2 .784 2.784 0 3.75 0h6.586c.464 0 .909.184 1.237.513l2.914 2.914c.329.328.513.773.513 1.237v9.586A1.75 1.75 0 0 1 13.25 16h-9.5A1.75 1.75 0 0 1 2 14.25Zm1.75-.25a.25.25 0 0 0-.25.25v12.5c0 .138.112.25.25.25h9.5a.25.25 0 0 0 .25-.25V6h-2.75A1.75 1.75 0 0 1 9 4.25V1.5Zm6.75.062V4.25c0 .138.112.25.25.25h2.688l-.011-.013-2.914-2.914-.013-.011Z"/></svg></span><span class="tname" style="left:48px">.eslintrc.cjs</span></div><div class="trow" style="top:865px"><span class="tico" style="left:24px"><svg width="16" height="16" viewBox="0 0 16 16" fill="#7d8590" stroke="#7d8590" stroke-width="0.55" style="display:block;flex:none;overflow:visible;"><path fill-rule="evenodd" d="M2 1.75C2 .784 2.784 0 3.75 0h6.586c.464 0 .909.184 1.237.513l2.914 2.914c.329.328.513.773.513 1.237v9.586A1.75 1.75 0 0 1 13.25 16h-9.5A1.75 1.75 0 0 1 2 14.25Zm1.75-.25a.25.25 0 0 0-.25.25v12.5c0 .138.112.25.25.25h9.5a.25.25 0 0 0 .25-.25V6h-2.75A1.75 1.75 0 0 1 9 4.25V1.5Zm6.75.062V4.25c0 .138.112.25.25.25h2.688l-.011-.013-2.914-2.914-.013-.011Z"/></svg></span><span class="tname" style="left:48px">.gitignore</span></div><div class="trow" style="top:897px"><span class="tico" style="left:24px"><svg width="16" height="16" viewBox="0 0 16 16" fill="#7d8590" stroke="#7d8590" stroke-width="0.55" style="display:block;flex:none;overflow:visible;"><path fill-rule="evenodd" d="M2 1.75C2 .784 2.784 0 3.75 0h6.586c.464 0 .909.184 1.237.513l2.914 2.914c.329.328.513.773.513 1.237v9.586A1.75 1.75 0 0 1 13.25 16h-9.5A1.75 1.75 0 0 1 2 14.25Zm1.75-.25a.25.25 0 0 0-.25.25v12.5c0 .138.112.25.25.25h9.5a.25.25 0 0 0 .25-.25V6h-2.75A1.75 1.75 0 0 1 9 4.25V1.5Zm6.75.062V4.25c0 .138.112.25.25.25h2.688l-.011-.013-2.914-2.914-.013-.011Z"/></svg></span><span class="tname" style="left:48px">README.md</span></div><div class="trow" style="top:929px"><span class="tico" style="left:24px"><svg width="16" height="16" viewBox="0 0 16 16" fill="#7d8590" stroke="#7d8590" stroke-width="0.55" style="display:block;flex:none;overflow:visible;"><path fill-rule="evenodd" d="M2 1.75C2 .784 2.784 0 3.75 0h6.586c.464 0 .909.184 1.237.513l2.914 2.914c.329.328.513.773.513 1.237v9.586A1.75 1.75 0 0 1 13.25 16h-9.5A1.75 1.75 0 0 1 2 14.25Zm1.75-.25a.25.25 0 0 0-.25.25v12.5c0 .138.112.25.25.25h9.5a.25.25 0 0 0 .25-.25V6h-2.75A1.75 1.75 0 0 1 9 4.25V1.5Zm6.75.062V4.25c0 .138.112.25.25.25h2.688l-.011-.013-2.914-2.914-.013-.011Z"/></svg></span><span class="tname" style="left:48px">index.html</span></div><div class="trow" style="top:961px"><span class="tico" style="left:24px"><svg width="16" height="16" viewBox="0 0 16 16" fill="#7d8590" stroke="#7d8590" stroke-width="0.55" style="display:block;flex:none;overflow:visible;"><path fill-rule="evenodd" d="M2 1.75C2 .784 2.784 0 3.75 0h6.586c.464 0 .909.184 1.237.513l2.914 2.914c.329.328.513.773.513 1.237v9.586A1.75 1.75 0 0 1 13.25 16h-9.5A1.75 1.75 0 0 1 2 14.25Zm1.75-.25a.25.25 0 0 0-.25.25v12.5c0 .138.112.25.25.25h9.5a.25.25 0 0 0 .25-.25V6h-2.75A1.75 1.75 0 0 1 9 4.25V1.5Zm6.75.062V4.25c0 .138.112.25.25.25h2.688l-.011-.013-2.914-2.914-.013-.011Z"/></svg></span><span class="tname" style="left:48px">jsconfig.json</span></div>
  </div>

  <div id="main">
    <!-- breadcrumb -->
    <div class="abs" style="left:16px;top:21.500px;font-size:16.800px;line-height:24px;white-space:nowrap">
      <span style="color:#3686f8;font-weight:700;font-size:15.800px">dotch</span><span class="mut" style="margin:0 4px">/</span><span style="color:#2f81f7">src</span><span class="mut" style="margin:0 4px">/</span><span style="color:#2f81f7">components</span><span class="mut" style="margin:0 4px">/</span><span style="font-weight:700;font-size:15.800px">WebCam.vue</span>
    </div>
    <div class="abs" style="left:323px;top:25px"><svg width="16" height="16" viewBox="0 0 16 16" fill="#7d8590" stroke="#7d8590" stroke-width="0.55" style="display:block;flex:none;overflow:visible;"><path fill-rule="evenodd" d="M0 6.75C0 5.784.784 5 1.75 5h1.5a.75.75 0 0 1 0 1.5h-1.5a.25.25 0 0 0-.25.25v7.5c0 .138.112.25.25.25h7.5a.25.25 0 0 0 .25-.25v-1.5a.75.75 0 0 1 1.500 0v1.500A1.750 1.750 0 0 1 9.250 16h-7.500A1.750 1.750 0 0 1 0 14.250Z M5 1.750C5 .784 5.784 0 6.750 0h7.500C15.216 0 16 .784 16 1.750v7.500A1.750 1.750 0 0 1 14.250 11h-7.500A1.750 1.750 0 0 1 5 9.250Zm1.750-.250a.25.25 0 0 0-.250.250v7.500c0 .138.112.250.250.250h7.500a.25.25 0 0 0 .250-.250v-7.500a.25.25 0 0 0-.250-.250Z"/></svg></div>
    <div class="abs btn" style="left:1143px;top:16px;width:32px;height:32px;display:flex;align-items:center;justify-content:center"><svg width="16" height="16" viewBox="0 0 16 16" fill="#7d8590" stroke="#7d8590" stroke-width="0.55" style="display:block;flex:none;overflow:visible;"><path fill-rule="evenodd" d="M8 9a1.5 1.5 0 1 0 0-3 1.5 1.5 0 0 0 0 3ZM1.5 9a1.5 1.5 0 1 0 0-3 1.5 1.5 0 0 0 0 3Zm13 0a1.5 1.5 0 1 0 0-3 1.5 1.5 0 0 0 0 3Z"/></svg></div>

    <!-- commit box -->
    <div class="abs" style="left:15px;top:64px;width:1160px;height:46px;border:1px solid #30363d;border-radius:6px">
      <svg class="abs" style="left:16px;top:13px" width="20" height="20" viewBox="0 0 32 32"><g clip-path="url(#av)"><rect width="32" height="32" fill="#ebe3d3"/><rect x="15" width="17" height="32" fill="#9c4f2b"/><rect x="22" width="4" height="32" fill="#b7683c"/><path d="M0 32c1-8 6-10.500 15-10.500S29 24 31 32z" fill="#d8a655"/><path d="M13 22h8l1 10h-10z" fill="#c99a4e"/><ellipse cx="17.500" cy="15.500" rx="7" ry="8.500" fill="#3a2319"/><path d="M9.500 13c-.5-6 3.500-8.500 8-8.500s8.500 2.500 8 8.500c-2.500-3.500-13.500-3.500-16 0z" fill="#15100e"/><ellipse cx="17.500" cy="20" rx="2.800" ry="1.500" fill="#e9dcd4"/></g></svg>
      <div class="abs" style="left:45px;top:12.700px;font-weight:700;font-size:14.300px;white-space:nowrap">fathermerry</div>
      <div class="abs mut" style="left:134px;top:12.700px;white-space:nowrap">scan receipt from server</div>
      <div class="abs mut" style="right:104px;top:12.700px;font-size:12.800px;white-space:nowrap">0205bd7 · 20 hours ago</div>
      <div class="abs" style="left:1071px;top:14.500px"><svg width="16" height="16" viewBox="0 0 16 16" fill="#7d8590" stroke="#7d8590" stroke-width="0.55" style="display:block;flex:none;overflow:visible;"><path fill-rule="evenodd" d="m.427 1.927 1.215 1.215a8.002 8.002 0 1 1-1.6 5.685.75.75 0 1 1 1.493-.154 6.5 6.5 0 1 0 1.18-4.458l1.358 1.358A.25.25 0 0 1 3.896 6H.25A.25.25 0 0 1 0 5.75V2.104a.25.25 0 0 1 .427-.177ZM7.75 4a.75.75 0 0 1 .75.75v2.992l2.028.812a.75.75 0 0 1-.557 1.392l-2.5-1A.751.751 0 0 1 7 8.25v-3.5A.75.75 0 0 1 7.75 4Z"/></svg></div>
      <div class="abs" style="left:1091px;top:12.700px;font-size:12.300px;font-weight:700;white-space:nowrap">History</div>
    </div>

    <!-- file box -->
    <div class="abs" style="left:15px;top:126px;width:1160px;height:760px;border:1px solid #30363d;border-radius:6px 6px 0 0;background:#0d1117">
      <div class="abs" style="left:0;top:0;width:1158px;height:45.500px;background:#161b22;border-bottom:1px solid #30363d;border-radius:6px 6px 0 0"></div>
      <!-- segmented -->
      <div class="abs" style="left:8px;top:7px;width:129px;height:31px;border-radius:6px;background:#1f242c"></div>
      <div class="abs" style="left:8px;top:7px;width:62px;height:31px;border-radius:6px;border:1px solid #7d8590;background:#0d1117;text-align:center;font-weight:700;font-size:14.300px;line-height:30px">Code</div>
      <div class="abs" style="left:83.500px;top:13px;">Blame</div>
      <div class="abs mut" style="left:146px;top:14px;font-family:'Liberation Mono',monospace;font-size:12px;white-space:pre">142 lines (140 loc) · 3.12 KB</div>
      <!-- raw group -->
      <div class="abs btn" style="left:956px;top:9px;width:97px;height:28px">
        <div class="abs" style="left:8px;top:3px;font-size:12.600px;-webkit-text-stroke:0.3px #e6edf3">Raw</div>
        <div class="abs" style="left:40px;top:0;width:1px;height:26px;background:#30363d"></div>
        <div class="abs" style="left:47px;top:5px"><svg width="16" height="16" viewBox="0 0 16 16" fill="#c9d1d9" stroke="#c9d1d9" stroke-width="0.55" style="display:block;flex:none;overflow:visible;"><path fill-rule="evenodd" d="M0 6.75C0 5.784.784 5 1.75 5h1.5a.75.75 0 0 1 0 1.5h-1.5a.25.25 0 0 0-.25.25v7.5c0 .138.112.25.25.25h7.5a.25.25 0 0 0 .25-.25v-1.5a.75.75 0 0 1 1.500 0v1.500A1.750 1.750 0 0 1 9.250 16h-7.500A1.750 1.750 0 0 1 0 14.250Z M5 1.750C5 .784 5.784 0 6.750 0h7.500C15.216 0 16 .784 16 1.750v7.500A1.750 1.750 0 0 1 14.250 11h-7.500A1.750 1.750 0 0 1 5 9.250Zm1.750-.250a.25.25 0 0 0-.250.250v7.500c0 .138.112.250.250.250h7.500a.25.25 0 0 0 .250-.250v-7.500a.25.25 0 0 0-.250-.250Z"/></svg></div>
        <div class="abs" style="left:68px;top:0;width:1px;height:26px;background:#30363d"></div>
        <div class="abs" style="left:75px;top:5px"><svg width="16" height="16" viewBox="0 0 16 16" fill="#c9d1d9" stroke="#c9d1d9" stroke-width="0.55" style="display:block;flex:none;overflow:visible;"><path fill-rule="evenodd" d="M2.75 14A1.75 1.75 0 0 1 1 12.25v-2.5a.75.75 0 0 1 1.5 0v2.5c0 .138.112.25.25.25h10.5a.25.25 0 0 0 .25-.25v-2.5a.75.75 0 0 1 1.5 0v2.5A1.75 1.75 0 0 1 13.25 14Z M7.25 7.689V2a.75.75 0 0 1 1.5 0v5.689l1.97-1.969a.749.749 0 1 1 1.06 1.06l-3.25 3.25a.749.749 0 0 1-1.06 0L4.22 6.78a.749.749 0 1 1 1.06-1.06l1.97 1.969Z"/></svg></div>
      </div>
      <div class="abs btn" style="left:1060px;top:9px;width:55px;height:28px">
        <div class="abs" style="left:6px;top:5px"><svg width="16" height="16" viewBox="0 0 16 16" fill="#c9d1d9" stroke="#c9d1d9" stroke-width="0.55" style="display:block;flex:none;overflow:visible;"><path fill-rule="evenodd" d="M11.013 1.427a1.75 1.75 0 0 1 2.474 0l1.086 1.086a1.75 1.75 0 0 1 0 2.474l-8.61 8.61c-.21.21-.47.364-.756.445l-3.251.93a.75.75 0 0 1-.927-.928l.929-3.25c.081-.286.235-.547.445-.758l8.61-8.61Zm.176 4.823L9.75 4.81l-6.286 6.287a.253.253 0 0 0-.064.108l-.558 1.953 1.953-.558a.253.253 0 0 0 .108-.064Zm1.238-3.763a.25.25 0 0 0-.354 0L10.811 3.75l1.439 1.44 1.263-1.263a.25.25 0 0 0 0-.354Z"/></svg></div>
        <div class="abs" style="left:27px;top:0;width:1px;height:26px;background:#30363d"></div>
        <div class="abs" style="left:33px;top:5px"><svg width="16" height="16" viewBox="0 0 16 16" fill="#c9d1d9" stroke="#c9d1d9" stroke-width="0" style="display:block;flex:none;overflow:visible;"><path fill-rule="evenodd" d="m4.427 7.427 3.396 3.396a.25.25 0 0 0 .354 0l3.396-3.396A.25.25 0 0 0 11.396 7H4.604a.25.25 0 0 0-.177.427Z"/></svg></div>
      </div>
      <div class="abs" style="left:1128px;top:15px"><svg width="16" height="16" viewBox="0 0 16 16" fill="#7d8590" stroke="#7d8590" stroke-width="0.55" style="display:block;flex:none;overflow:visible;"><path fill-rule="evenodd" d="M0 1.75C0 .784.784 0 1.75 0h12.5C15.216 0 16 .784 16 1.75v12.5A1.75 1.75 0 0 1 14.25 16H1.75A1.75 1.75 0 0 1 0 14.25Zm1.75-.25a.25.25 0 0 0-.25.25v12.5c0 .138.112.25.25.25h12.5a.25.25 0 0 0 .25-.25V1.75a.25.25 0 0 0-.25-.25Zm7.47 3.97a.75.75 0 0 1 1.06 0l2 2a.75.75 0 0 1 0 1.06l-2 2a.749.749 0 0 1-1.275-.326.749.749 0 0 1 .215-.734L10.69 8 9.22 6.53a.75.75 0 0 1 0-1.06ZM6.78 6.53 5.31 8l1.47 1.47a.749.749 0 0 1-.326 1.275.749.749 0 0 1-.734-.215l-2-2a.75.75 0 0 1 0-1.06l2-2a.751.751 0 0 1 1.042.018.751.751 0 0 1 .018 1.042Z"/></svg></div>
      <!-- code -->
      <div class="abs" style="left:0;top:54.500px;width:1158px">
        <div class="cl"><span class="ln">1</span><span class="cc"><span style="color:#e6edf3">&lt;</span><span style="color:#7ee787">template</span><span style="color:#e6edf3">&gt;</span></span></div><div class="cl"><span class="ln">2</span><span class="cc">  <span style="color:#e6edf3">&lt;</span><span style="color:#7ee787">div</span> <span style="color:#d2a8ff">id</span><span style="color:#e6edf3">=</span><span style="color:#a5d6ff">"webcam"</span><span style="color:#e6edf3">&gt;</span></span></div><div class="cl"><span class="ln">3</span><span class="cc">    <span style="color:#e6edf3">&lt;</span><span style="color:#7ee787">div</span> <span style="color:#d2a8ff">id</span><span style="color:#e6edf3">=</span><span style="color:#a5d6ff">"overlay"</span> <span style="color:#d2a8ff">v-if</span><span style="color:#e6edf3">=</span><span style="color:#a5d6ff">"</span><span style="color:#e6edf3">error </span><span style="color:#ff7b72">||</span><span style="color:#e6edf3"> isLoading</span><span style="color:#a5d6ff">"</span><span style="color:#e6edf3">&gt;</span></span></div><div class="cl"><span class="ln">4</span><span class="cc">      <span style="color:#e6edf3">&lt;</span><span style="color:#7ee787">div</span> <span style="color:#d2a8ff">class</span><span style="color:#e6edf3">=</span><span style="color:#a5d6ff">"spinner"</span> <span style="color:#d2a8ff">v-if</span><span style="color:#e6edf3">=</span><span style="color:#a5d6ff">"</span><span style="color:#e6edf3">isLoading</span><span style="color:#a5d6ff">"</span><span style="color:#e6edf3">&gt;</span><span style="color:#e6edf3">&lt;/</span><span style="color:#7ee787">div</span><span style="color:#e6edf3">&gt;</span></span></div><div class="cl"><span class="ln">5</span><span class="cc">      <span style="color:#e6edf3">&lt;</span><span style="color:#7ee787">div</span> <span style="color:#d2a8ff">v-if</span><span style="color:#e6edf3">=</span><span style="color:#a5d6ff">"</span><span style="color:#e6edf3">error</span><span style="color:#a5d6ff">"</span><span style="color:#e6edf3">&gt;</span><span style="color:#e6edf3">{{ error }}</span><span style="color:#e6edf3">&lt;/</span><span style="color:#7ee787">div</span><span style="color:#e6edf3">&gt;</span></span></div><div class="cl"><span class="ln">6</span><span class="cc">    <span style="color:#e6edf3">&lt;/</span><span style="color:#7ee787">div</span><span style="color:#e6edf3">&gt;</span></span></div><div class="cl"><span class="ln">7</span><span class="cc">    <span style="color:#e6edf3">&lt;</span><span style="color:#7ee787">video</span> <span style="color:#d2a8ff">ref</span><span style="color:#e6edf3">=</span><span style="color:#a5d6ff">"camera"</span> <span style="color:#d2a8ff">autoplay</span> <span style="color:#d2a8ff">playsinline</span> <span style="color:#d2a8ff">v-show</span><span style="color:#e6edf3">=</span><span style="color:#a5d6ff">"</span><span style="color:#ff7b72">!</span><span style="color:#e6edf3">isPhotoTaken</span><span style="color:#a5d6ff">"</span><span style="color:#e6edf3">&gt;</span><span style="color:#e6edf3">&lt;/</span><span style="color:#7ee787">video</span><span style="color:#e6edf3">&gt;</span></span></div><div class="cl"><span class="ln">8</span><span class="cc">    <span style="color:#e6edf3">&lt;</span><span style="color:#7ee787">canvas</span> <span style="color:#d2a8ff">ref</span><span style="color:#e6edf3">=</span><span style="color:#a5d6ff">"canvas"</span> <span style="color:#d2a8ff">v-show</span><span style="color:#e6edf3">=</span><span style="color:#a5d6ff">"</span><span style="color:#e6edf3">isPhotoTaken</span><span style="color:#a5d6ff">"</span><span style="color:#e6edf3">&gt;</span><span style="color:#e6edf3">&lt;/</span><span style="color:#7ee787">canvas</span><span style="color:#e6edf3">&gt;</span></span></div><div class="cl"><span class="ln">9</span><span class="cc">    <span style="color:#e6edf3">&lt;</span><span style="color:#7ee787">footer</span> <span style="color:#d2a8ff">v-if</span><span style="color:#e6edf3">=</span><span style="color:#a5d6ff">"</span><span style="color:#ff7b72">!</span><span style="color:#e6edf3">isLoading</span><span style="color:#a5d6ff">"</span><span style="color:#e6edf3">&gt;</span></span></div><div class="cl"><span class="ln">10</span><span class="cc">      <span style="color:#e6edf3">&lt;</span><span style="color:#7ee787">div</span> <span style="color:#d2a8ff">v-if</span><span style="color:#e6edf3">=</span><span style="color:#a5d6ff">"</span><span style="color:#e6edf3">processing</span><span style="color:#a5d6ff">"</span><span style="color:#e6edf3">&gt;</span></span></div><div class="cl"><span class="ln">11</span><span class="cc">        <span style="color:#e6edf3">&lt;</span><span style="color:#7ee787">Transition</span> <span style="color:#d2a8ff">name</span><span style="color:#e6edf3">=</span><span style="color:#a5d6ff">"slide-up"</span> <span style="color:#d2a8ff">mode</span><span style="color:#e6edf3">=</span><span style="color:#a5d6ff">"out-in"</span><span style="color:#e6edf3">&gt;</span></span></div><div class="cl"><span class="ln">12</span><span class="cc">          <span style="color:#e6edf3">&lt;</span><span style="color:#7ee787">div</span> <span style="color:#d2a8ff">class</span><span style="color:#e6edf3">=</span><span style="color:#a5d6ff">"spinner"</span><span style="color:#e6edf3">&gt;</span><span style="color:#e6edf3">&lt;/</span><span style="color:#7ee787">div</span><span style="color:#e6edf3">&gt;</span></span></div><div class="cl"><span class="ln">13</span><span class="cc">        <span style="color:#e6edf3">&lt;/</span><span style="color:#7ee787">Transition</span><span style="color:#e6edf3">&gt;</span></span></div><div class="cl"><span class="ln">14</span><span class="cc">      <span style="color:#e6edf3">&lt;/</span><span style="color:#7ee787">div</span><span style="color:#e6edf3">&gt;</span></span></div><div class="cl"><span class="ln">15</span><span class="cc">      <span style="color:#e6edf3">&lt;</span><span style="color:#7ee787">div</span> <span style="color:#d2a8ff">v-if</span><span style="color:#e6edf3">=</span><span style="color:#a5d6ff">"</span><span style="color:#ff7b72">!</span><span style="color:#e6edf3">processing</span><span style="color:#a5d6ff">"</span><span style="color:#e6edf3">&gt;</span></span></div><div class="cl"><span class="ln">16</span><span class="cc">        <span style="color:#e6edf3">&lt;</span><span style="color:#7ee787">button</span> <span style="color:#d2a8ff">class</span><span style="color:#e6edf3">=</span><span style="color:#a5d6ff">"secondary"</span> <span style="color:#d2a8ff">v-if</span><span style="color:#e6edf3">=</span><span style="color:#a5d6ff">"</span><span style="color:#ff7b72">!</span><span style="color:#e6edf3">isPhotoTaken</span><span style="color:#a5d6ff">"</span> <span style="color:#e6edf3">@</span><span style="color:#d2a8ff">click</span><span style="color:#e6edf3">=</span><span style="color:#a5d6ff">"</span><span style="color:#e6edf3">exitCamera</span><span style="color:#a5d6ff">"</span><span style="color:#e6edf3">&gt;</span><span style="color:#e6edf3">Cancel</span><span style="color:#e6edf3">&lt;/</span><span style="color:#7ee787">button</span><span style="color:#e6edf3">&gt;</span></span></div><div class="cl"><span class="ln">17</span><span class="cc">        <span style="color:#e6edf3">&lt;</span><span style="color:#7ee787">button</span> <span style="color:#d2a8ff">class</span><span style="color:#e6edf3">=</span><span style="color:#a5d6ff">"secondary"</span> <span style="color:#d2a8ff">v-else</span> <span style="color:#e6edf3">@</span><span style="color:#d2a8ff">click</span><span style="color:#e6edf3">=</span><span style="color:#a5d6ff">"</span><span style="color:#e6edf3">resetCamera</span><span style="color:#a5d6ff">"</span><span style="color:#e6edf3">&gt;</span><span style="color:#e6edf3">Retake</span><span style="color:#e6edf3">&lt;/</span><span style="color:#7ee787">button</span><span style="color:#e6edf3">&gt;</span></span></div><div class="cl"><span class="ln">18</span><span class="cc">        <span style="color:#e6edf3">&lt;</span><span style="color:#7ee787">Transition</span> <span style="color:#d2a8ff">name</span><span style="color:#e6edf3">=</span><span style="color:#a5d6ff">"slide-up"</span> <span style="color:#d2a8ff">mode</span><span style="color:#e6edf3">=</span><span style="color:#a5d6ff">"out-in"</span><span style="color:#e6edf3">&gt;</span></span></div><div class="cl"><span class="ln">19</span><span class="cc">        <span style="color:#e6edf3">&lt;</span><span style="color:#7ee787">button</span> <span style="color:#d2a8ff">v-if</span><span style="color:#e6edf3">=</span><span style="color:#a5d6ff">"</span><span style="color:#ff7b72">!</span><span style="color:#e6edf3">isPhotoTaken</span><span style="color:#a5d6ff">"</span> <span style="color:#e6edf3">@</span><span style="color:#d2a8ff">click</span><span style="color:#e6edf3">=</span><span style="color:#a5d6ff">"</span><span style="color:#e6edf3">capturePhoto</span><span style="color:#a5d6ff">"</span><span style="color:#e6edf3">&gt;</span><span style="color:#e6edf3">Capture</span><span style="color:#e6edf3">&lt;/</span><span style="color:#7ee787">button</span><span style="color:#e6edf3">&gt;</span></span></div><div class="cl"><span class="ln">20</span><span class="cc">        <span style="color:#e6edf3">&lt;</span><span style="color:#7ee787">button</span> <span style="color:#d2a8ff">v-else</span> <span style="color:#d2a8ff">class</span><span style="color:#e6edf3">=</span><span style="color:#a5d6ff">"danger"</span> <span style="color:#e6edf3">@</span><span style="color:#d2a8ff">click</span><span style="color:#e6edf3">=</span><span style="color:#a5d6ff">"</span><span style="color:#e6edf3">publishPhoto</span><span style="color:#a5d6ff">"</span><span style="color:#e6edf3">&gt;</span><span style="color:#e6edf3">Scan</span><span style="color:#e6edf3">&lt;/</span><span style="color:#7ee787">button</span><span style="color:#e6edf3">&gt;</span></span></div><div class="cl"><span class="ln">21</span><span class="cc">        <span style="color:#e6edf3">&lt;/</span><span style="color:#7ee787">Transition</span><span style="color:#e6edf3">&gt;</span></span></div><div class="cl"><span class="ln">22</span><span class="cc">      <span style="color:#e6edf3">&lt;/</span><span style="color:#7ee787">div</span><span style="color:#e6edf3">&gt;</span></span></div><div class="cl"><span class="ln">23</span><span class="cc">    <span style="color:#e6edf3">&lt;/</span><span style="color:#7ee787">footer</span><span style="color:#e6edf3">&gt;</span></span></div><div class="cl"><span class="ln">24</span><span class="cc">  <span style="color:#e6edf3">&lt;/</span><span style="color:#7ee787">div</span><span style="color:#e6edf3">&gt;</span></span></div><div class="cl"><span class="ln">25</span><span class="cc"><span style="color:#e6edf3">&lt;/</span><span style="color:#7ee787">template</span><span style="color:#e6edf3">&gt;</span></span></div><div class="cl"><span class="ln">26</span><span class="cc"></span></div><div class="cl"><span class="ln">27</span><span class="cc"><span style="color:#e6edf3">&lt;</span><span style="color:#7ee787">script</span><span style="color:#e6edf3">&gt;</span></span></div><div class="cl"><span class="ln">28</span><span class="cc"><span style="color:#ff7b72">export</span> <span style="color:#79c0ff">default</span><span style="color:#e6edf3"> {</span></span></div><div class="cl"><span class="ln">29</span><span class="cc">  <span style="color:#e6edf3">props</span><span style="color:#ff7b72">:</span><span style="color:#e6edf3"> {</span></span></div><div class="cl"><span class="ln">30</span><span class="cc">    <span style="color:#e6edf3">error</span><span style="color:#ff7b72">:</span> <span style="color:#79c0ff">String</span><span style="color:#e6edf3">,</span></span></div><div class="cl"><span class="ln">31</span><span class="cc">    <span style="color:#e6edf3">processing</span><span style="color:#ff7b72">:</span> <span style="color:#79c0ff">Boolean</span><span style="color:#e6edf3">,</span></span></div><div class="cl"><span class="ln">32</span><span class="cc">  <span style="color:#e6edf3">},</span></span></div><div class="cl"><span class="ln">33</span><span class="cc">  <span style="color:#d2a8ff">data</span><span style="color:#e6edf3">() {</span></span></div><div class="cl"><span class="ln">34</span><span class="cc">    <span style="color:#ff7b72">return</span><span style="color:#e6edf3"> {</span></span></div>
      </div>
    </div>
  </div>

  <!-- cursor -->
  <svg class="abs" style="left:1290px;top:586px" width="16" height="24" viewBox="0 0 16 24"><path d="M2 1.500h4.300L8 2.700 9.700 1.500H14v4h-3.200v12H14v4H9.700L8 20.300 6.300 21.500H2v-4h3.200v-12H2z" fill="#b9b9b9" stroke="#08090c" stroke-width="1.800" stroke-linejoin="round"/><path d="M5.200 11.500h5.600" stroke="#6f6f6f" stroke-width="1.400"/></svg>

  <!-- floating widget -->
  <svg class="abs" style="left:0;top:901.300px" width="90" height="70" viewBox="0 0 90 70">
    <g fill="#7672f7"><circle cx="7" cy="28" r="2.100"/><circle cx="12.800" cy="28" r="2.100"/><circle cx="7" cy="34.300" r="2.100"/><circle cx="12.800" cy="34.300" r="2.100"/><circle cx="7" cy="40.700" r="2.100"/><circle cx="12.800" cy="40.700" r="2.100"/></g>
    <circle cx="47.700" cy="33.700" r="27.800" fill="#6663f5"/>
    <g stroke="#fff" stroke-width="2.300" stroke-linecap="butt">
      <path d="M47.700 21.700v24M35.700 33.700h24M37.300 27.700l20.800 12M41.700 23.300l12 20.800M53.700 23.300l-12 20.800M58.100 27.700l-20.800 12"/>
    </g>
    <circle cx="47.700" cy="33.700" r="4.600" fill="#fff"/>
    <circle cx="47.700" cy="33.700" r="2.500" fill="#6663f5"/>
  </svg>
</div>
</body>
</html>
